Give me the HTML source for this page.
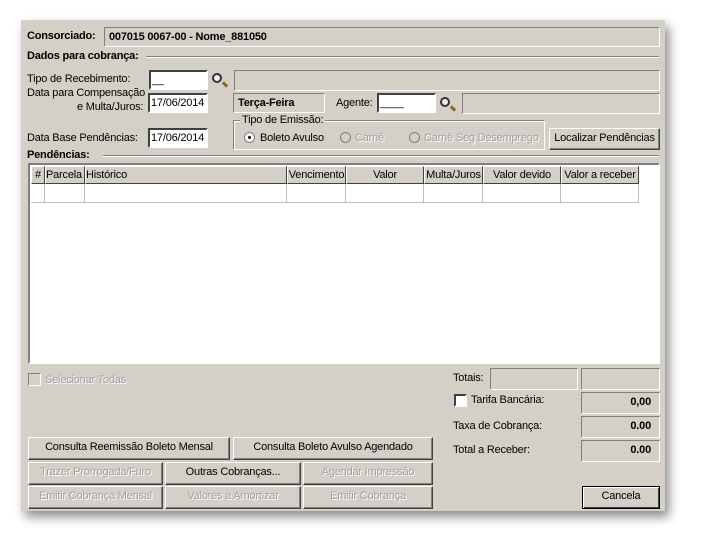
<!DOCTYPE html>
<html><head><meta charset="utf-8"><style>
body{margin:0;width:707px;height:552px;background:#fff;position:relative;overflow:hidden;font-family:"Liberation Sans",sans-serif;font-size:11px;color:#000;letter-spacing:-0.2px}
.win{position:absolute;left:21px;top:20px;width:644px;height:491px;background:#d4d0c8;box-shadow:4px 6px 10px rgba(0,0,0,.45)}
.a{position:absolute;white-space:nowrap}
.sunk{position:absolute;border:1px solid;border-color:#808080 #fff #fff #808080;background:#d4d0c8;box-sizing:border-box}
.inp{position:absolute;background:#fff;box-sizing:border-box;border:2px solid;border-color:#404040 #fff #fff #404040;padding:2px 1px;font-size:11px}
.b{font-weight:bold}
.line{position:absolute;height:0;border-top:1px solid #808080;border-bottom:1px solid #fff}
.btn{position:absolute;box-sizing:border-box;background:#d4d0c8;border:1px solid;border-color:#fff #404040 #404040 #fff;box-shadow:inset -1px -1px 0 #808080;text-align:center;line-height:19px}
.dis{color:#a0a0a0;text-shadow:1px 1px 0 #fff}
.th{position:absolute;top:0;height:18px;box-sizing:border-box;border:1px solid;border-color:#fff #404040 #404040 #fff;text-align:center;line-height:16px;background:#d4d0c8}
.td{position:absolute;top:18px;height:19px;box-sizing:border-box;border-right:1px solid #c0c0c0;border-bottom:1px solid #c0c0c0}
.val{position:absolute;box-sizing:border-box;border:1px solid;border-color:#808080 #fff #fff #808080;text-align:right;padding-right:8px;font-weight:bold;line-height:19px}
.mag{position:absolute;width:10px;height:10px;border:2px solid #333;border-radius:50%;box-sizing:border-box;background:#eef}
.mag:after{content:"";position:absolute;left:8px;top:8px;width:6px;height:3px;background:#8a6a10;transform:rotate(45deg)}
.rad{position:absolute;width:11px;height:11px;border-radius:50%;background:#fff;border:1px solid #808080;box-sizing:border-box}
</style></head><body>
<div class="win"></div>
<div class="a b" style="left:27px;top:30px">Consorciado:</div>
<div class="sunk b" style="left:104px;top:27px;width:556px;height:20px;padding:3px 4px">007015 0067-00 - Nome_881050</div>
<div class="a b" style="left:27px;top:50px">Dados para cobrança:</div>
<div class="line" style="left:146px;top:56px;width:513px"></div>
<div class="a" style="left:27px;top:73px">Tipo de Recebimento:</div>
<div class="inp" style="left:149px;top:70px;width:59px;height:20px">__</div>
<div class="mag" style="left:212px;top:73px"></div>
<div class="sunk" style="left:234px;top:70px;width:426px;height:21px"></div>
<div class="a" style="left:27px;top:87px">Data para Compensação</div>
<div class="a" style="left:77px;top:101px">e Multa/Juros:</div>
<div class="inp" style="left:148px;top:93px;width:60px;height:20px">17/06/2014</div>
<div class="sunk b" style="left:233px;top:93px;width:92px;height:20px;padding:3px 4px">Terça-Feira</div>
<div class="a" style="left:336px;top:97px">Agente:</div>
<div class="inp" style="left:377px;top:93px;width:59px;height:20px">____</div>
<div class="mag" style="left:440px;top:97px"></div>
<div class="sunk" style="left:462px;top:93px;width:198px;height:21px"></div>
<div style="position:absolute;left:233px;top:120px;width:312px;height:30px;box-sizing:border-box;border:1px solid;border-color:#808080 #fff #fff #808080;box-shadow:inset 1px 1px 0 #fff"></div>
<div class="a" style="left:240px;top:114px;background:#d4d0c8;padding:0 2px">Tipo de Emissão:</div>
<div class="rad" style="left:244px;top:132px"><div style="position:absolute;left:3px;top:3px;width:3px;height:3px;background:#000;border-radius:50%"></div></div>
<div class="a" style="left:260px;top:132px">Boleto Avulso</div>
<div class="rad" style="left:340px;top:132px;background:#d4d0c8"></div>
<div class="a dis" style="left:355px;top:132px">Carnê</div>
<div class="rad" style="left:409px;top:132px;background:#d4d0c8"></div>
<div class="a dis" style="left:424px;top:132px">Carnê Seg Desemprego</div>
<div class="btn" style="left:549px;top:128px;width:111px;height:22px">Localizar Pendências</div>
<div class="a" style="left:27px;top:132px">Data Base Pendências:</div>
<div class="inp" style="left:148px;top:128px;width:60px;height:20px">17/06/2014</div>
<div class="a b" style="left:27px;top:149px">Pendências:</div>
<div class="line" style="left:103px;top:155px;width:556px"></div>
<div style="position:absolute;left:28px;top:163px;width:632px;height:201px;background:#fff;border:2px solid;border-color:#808080 #fff #fff #808080;box-sizing:border-box">
<div style="position:absolute;left:1px;top:1px">
<div class="th" style="left:0;width:14px">#</div>
<div class="th" style="left:14px;width:40px;text-align:left">Parcela</div>
<div class="th" style="left:54px;width:202px;text-align:left">Histórico</div>
<div class="th" style="left:256px;width:59px">Vencimento</div>
<div class="th" style="left:315px;width:78px">Valor</div>
<div class="th" style="left:393px;width:59px">Multa/Juros</div>
<div class="th" style="left:452px;width:78px">Valor devido</div>
<div class="th" style="left:530px;width:78px">Valor a receber</div>
<div class="td" style="left:0;width:14px"></div><div class="td" style="left:14px;width:40px"></div><div class="td" style="left:54px;width:202px"></div><div class="td" style="left:256px;width:59px"></div><div class="td" style="left:315px;width:78px"></div><div class="td" style="left:393px;width:59px"></div><div class="td" style="left:452px;width:78px"></div><div class="td" style="left:530px;width:78px"></div>
</div></div>
<div style="position:absolute;left:28px;top:373px;width:13px;height:13px;box-sizing:border-box;border:1px solid;border-color:#808080 #fff #fff #808080;background:#d4d0c8"></div>
<div class="a dis" style="left:45px;top:374px">Selecionar Todas</div>
<div class="a" style="left:453px;top:372px">Totais:</div>
<div class="sunk" style="left:490px;top:368px;width:88px;height:22px"></div>
<div class="sunk" style="left:581px;top:368px;width:79px;height:22px"></div>
<div style="position:absolute;left:454px;top:394px;width:13px;height:13px;box-sizing:border-box;border:2px solid;border-color:#404040 #fff #fff #404040;background:#fff"></div>
<div class="a" style="left:471px;top:394px">Tarifa Bancária:</div>
<div class="val" style="left:581px;top:392px;width:79px;height:22px">0,00</div>
<div class="a" style="left:453px;top:420px">Taxa de Cobrança:</div>
<div class="val" style="left:581px;top:416px;width:79px;height:22px">0.00</div>
<div class="a" style="left:453px;top:444px">Total a Receber:</div>
<div class="val" style="left:581px;top:440px;width:79px;height:22px">0.00</div>
<div class="btn" style="left:28px;top:437px;width:202px;height:23px">Consulta Reemissão Boleto Mensal</div>
<div class="btn" style="left:233px;top:437px;width:200px;height:23px">Consulta Boleto Avulso Agendado</div>
<div class="btn dis" style="left:28px;top:462px;width:135px;height:23px">Trazer Prorrogada/Furo</div>
<div class="btn" style="left:165px;top:462px;width:136px;height:23px">Outras Cobranças...</div>
<div class="btn dis" style="left:303px;top:462px;width:130px;height:23px">Agendar Impressão</div>
<div class="btn dis" style="left:28px;top:486px;width:135px;height:23px">Emitir Cobrança Mensal</div>
<div class="btn dis" style="left:165px;top:486px;width:136px;height:23px">Valores a Amortizar</div>
<div class="btn dis" style="left:303px;top:486px;width:130px;height:23px">Emitir Cobrança</div>
<div class="btn" style="left:582px;top:486px;width:78px;height:23px;border:1px solid #000;box-shadow:inset 1px 1px 0 #fff,inset -1px -1px 0 #404040">Cancela</div>
</body></html>
